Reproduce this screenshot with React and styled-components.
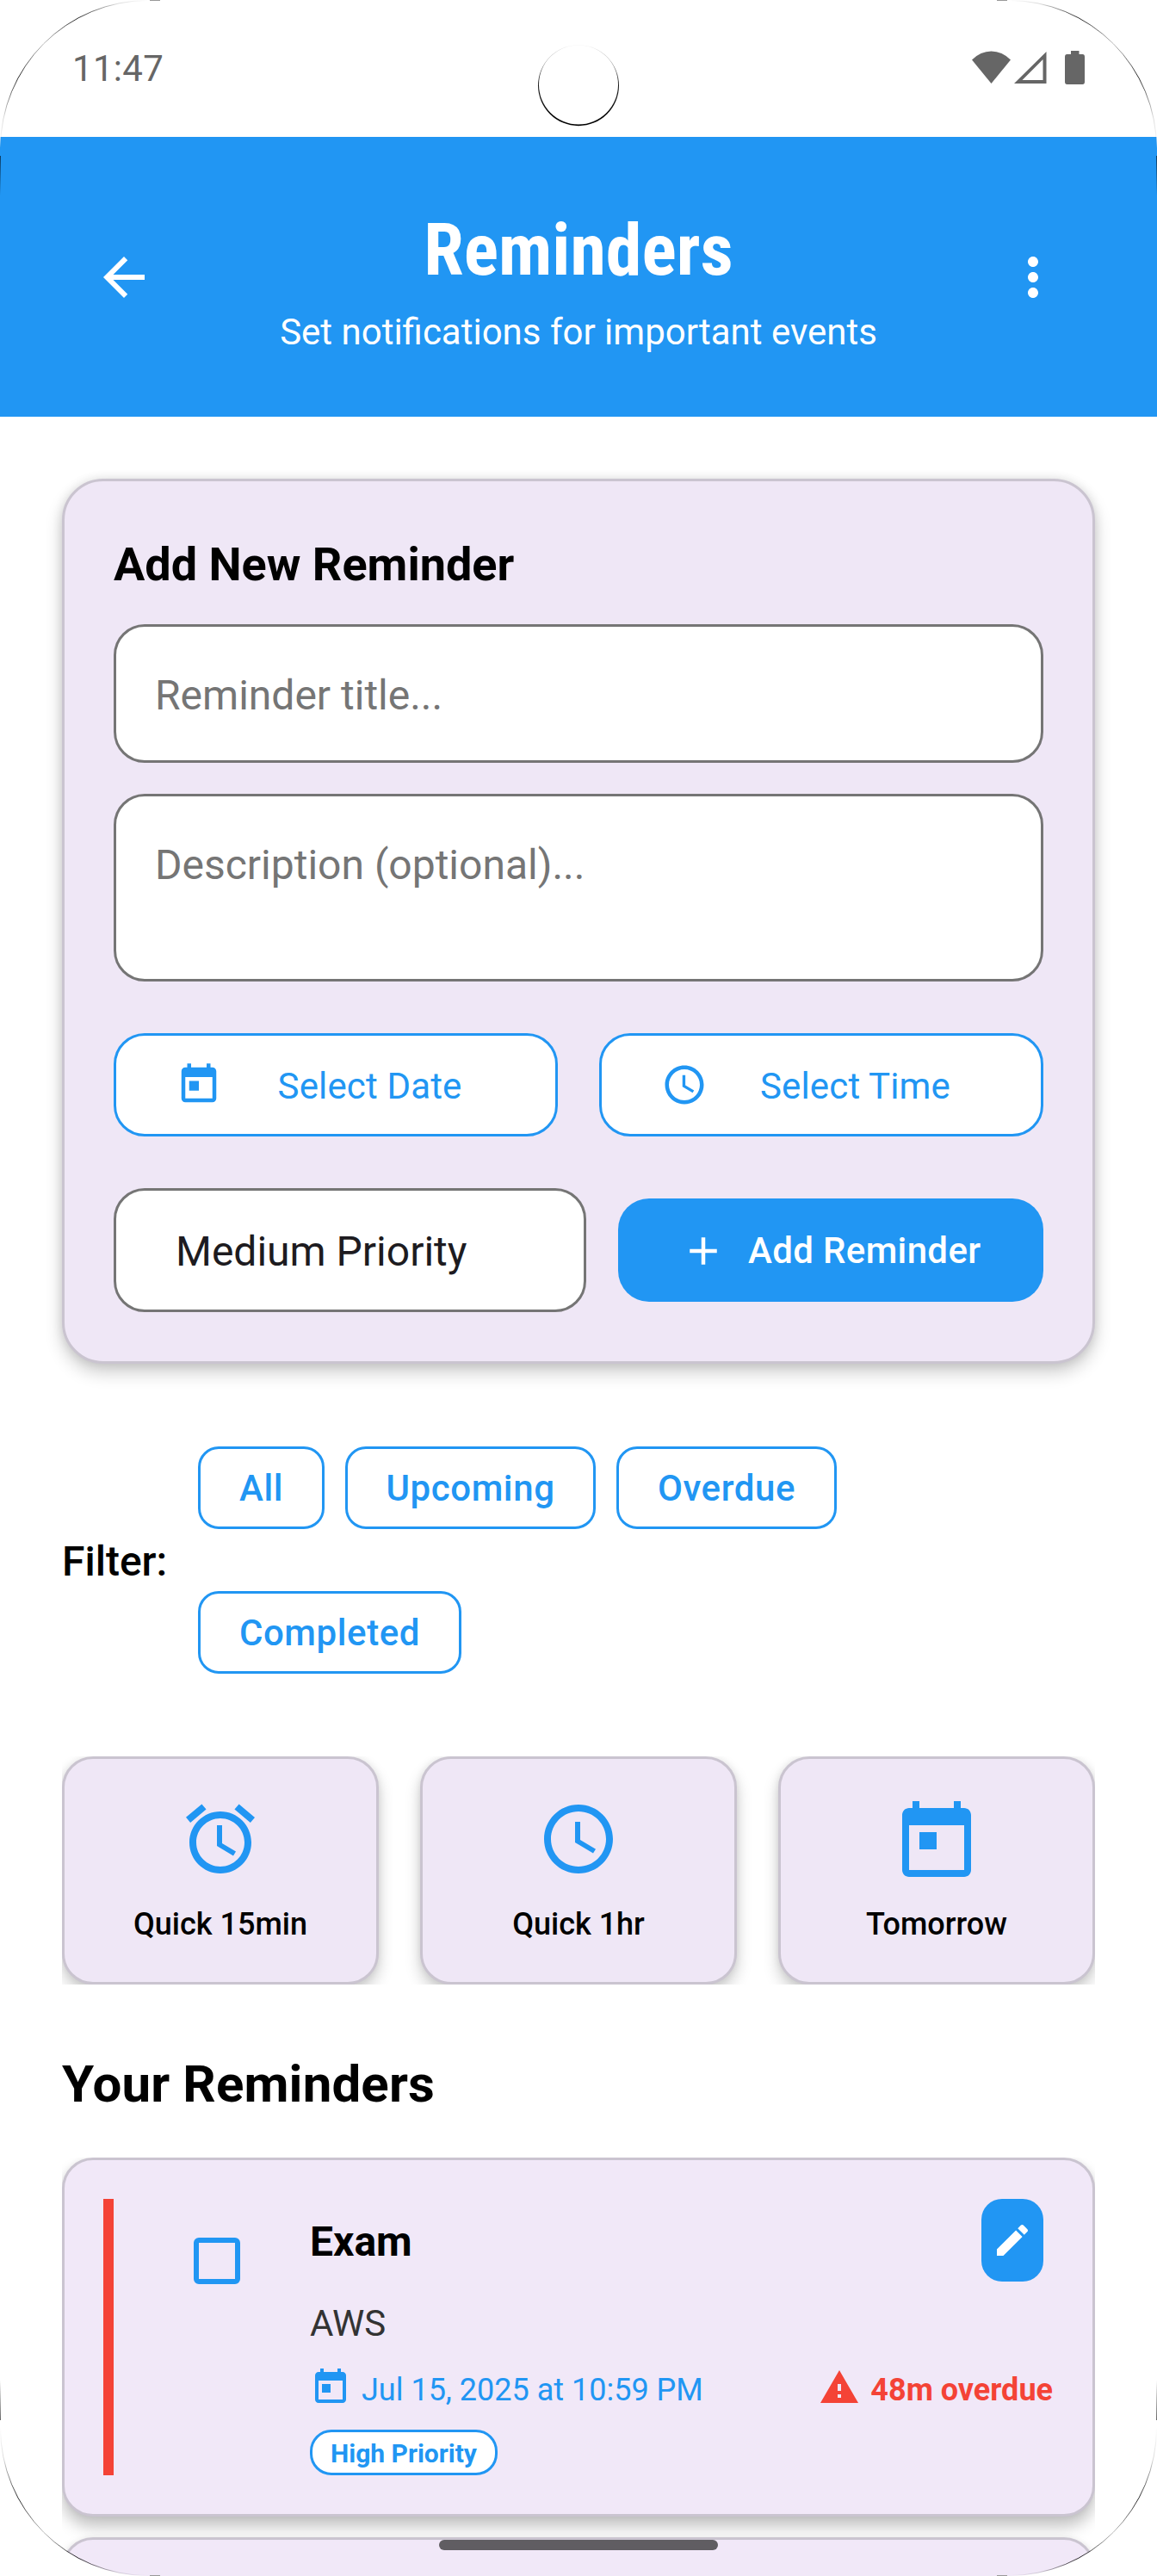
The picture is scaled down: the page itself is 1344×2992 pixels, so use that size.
import React from "react";
import styled, { createGlobalStyle } from "styled-components";

const BLUE = "#2196f3";
const RED = "#f44336";

const GlobalStyle = createGlobalStyle`
  * { box-sizing: border-box; }
  html, body { margin: 0; background: #fff; }
  body, input, textarea, button {
    font-family: Roboto, "Liberation Sans", sans-serif;
  }
`;

const Screen = styled.main`
  position: relative;
  display: flex;
  flex-direction: column;
  width: 1344px;
  height: 2992px;
  overflow: hidden;
  background: #fff;
  color: #000;
`;

const StatusBar = styled.div`
  display: flex;
  justify-content: space-between;
  align-items: flex-start;
  height: 159px;
  flex: none;
  padding: 55px 84px 0;
`;

const Clock = styled.span`
  font-size: 42px;
  line-height: 50px;
  letter-spacing: 0.3px;
  color: #666;
`;

const Header = styled.header`
  display: flex;
  align-items: center;
  justify-content: space-between;
  height: 325px;
  flex: none;
  padding: 0 108px;
  background: ${BLUE};
  color: #fff;
`;

const HeaderText = styled.div`
  display: flex;
  flex-direction: column;
  align-items: center;
  gap: 21px;
  padding-top: 9px;
`;

const Title = styled.h1`
  margin: 0;
  font-family: "Roboto Condensed", Roboto, sans-serif;
  font-stretch: 75%;
  font-weight: 700;
  font-size: 84px;
  line-height: 98px;
`;

const Subtitle = styled.p`
  margin: 0;
  font-size: 42px;
  line-height: 49px;
`;

const IconButton = styled.button`
  display: flex;
  padding: 0;
  border: 0;
  background: none;
  color: inherit;
`;

const Glyph = styled.svg`
  display: block;
  flex: none;
  width: ${(p) => p.$size}px;
  height: ${(p) => p.$size}px;
  fill: currentColor;
`;

const Content = styled.div`
  display: flex;
  flex-direction: column;
  padding: 72px 72px 0;
`;

const FormCard = styled.section`
  display: flex;
  flex-direction: column;
  height: 1028px;
  padding: 65px 57px 57px;
  border: 3px solid #cac4d0;
  border-radius: 48px;
  background: #efe7f6;
  box-shadow: 0 10px 20px rgba(0, 0, 0, 0.2), 0 0 12px rgba(0, 0, 0, 0.1);
`;

const CardTitle = styled.h2`
  margin: 0 0 37px;
  font-size: 54px;
  line-height: 64px;
  font-weight: 700;
`;

const TitleInput = styled.input`
  height: 161px;
  padding: 4px 45px 0;
  border: 3px solid #757575;
  border-radius: 36px;
  background: #fff;
  font-size: 48px;
  &::placeholder { color: #757575; opacity: 1; }
`;

const DescriptionInput = styled.textarea`
  height: 218px;
  margin: 36px 0 60px;
  padding: 52px 45px 0;
  border: 3px solid #757575;
  border-radius: 36px;
  background: #fff;
  font-size: 48px;
  line-height: 56px;
  resize: none;
  overflow: hidden;
  &::placeholder { color: #757575; opacity: 1; }
`;

const PickerRow = styled.div`
  display: flex;
  gap: 48px;
  margin-bottom: 60px;
`;

const PickerButton = styled.button`
  display: flex;
  align-items: center;
  flex: 1;
  height: 120px;
  padding: 0 69px;
  border: 3px solid ${BLUE};
  border-radius: 36px;
  background: #fff;
  color: ${BLUE};
  font-size: 42px;
`;

const PickerLabel = styled.span`
  flex: 1;
  padding: 2px 0 0 25px;
  letter-spacing: 0.15px;
  text-align: center;
`;

const SubmitRow = styled.div`
  display: flex;
  align-items: center;
  gap: 37px;
`;

const PrioritySelect = styled.div`
  display: flex;
  align-items: center;
  width: 549px;
  height: 144px;
  padding: 3px 69px 0;
  border: 3px solid #757575;
  border-radius: 36px;
  background: #fff;
  color: #1d1b20;
  font-size: 48px;
`;

const AddButton = styled.button`
  display: flex;
  align-items: center;
  flex: 1;
  height: 120px;
  gap: 25px;
  padding: 1px 0 0 72px;
  border: 0;
  border-radius: 36px;
  background: ${BLUE};
  color: #fff;
  font-size: 42px;
  font-weight: 500;
  letter-spacing: 0.35px;
  white-space: nowrap;
`;

const FilterRow = styled.section`
  display: flex;
  align-items: center;
  gap: 36px;
  margin-top: 96px;
  height: 264px;
`;

const FilterLabel = styled.span`
  width: 122px;
  padding-top: 2px;
  font-size: 48px;
  font-weight: 500;
  white-space: nowrap;
`;

const ChipGroup = styled.div`
  display: flex;
  flex-wrap: wrap;
  gap: 72px 24px;
  width: 900px;
`;

const Chip = styled.button`
  height: 96px;
  width: ${(p) => p.$width}px;
  padding: 0;
  border: 3px solid ${BLUE};
  border-radius: 24px;
  background: #fff;
  color: ${BLUE};
  font-size: 42px;
  font-weight: 500;
  letter-spacing: 0.6px;
  text-align: center;
`;

const QuickRow = styled.section`
  display: flex;
  gap: 48px;
  margin-top: 96px;
  height: 265px;
  overflow: hidden;
`;

const QuickCard = styled.button`
  display: flex;
  flex-direction: column;
  align-items: center;
  flex: 1;
  height: 265px;
  padding: 45px 0 0;
  border: 3px solid #cac4d0;
  border-radius: 36px;
  background: #efe7f6;
  box-shadow: 0 10px 18px rgba(0, 0, 0, 0.2), 0 0 8px rgba(0, 0, 0, 0.08);
  color: ${BLUE};
`;

const QuickLabel = styled.span`
  margin-top: 30px;
  font-size: 36px;
  line-height: 42px;
  font-weight: 500;
  color: #000;
`;

const SectionTitle = styled.h2`
  margin: 80px 0 50px;
  font-size: 60px;
  line-height: 71px;
  font-weight: 700;
  letter-spacing: 0.15px;
`;

const ReminderList = styled.section`
  display: flex;
  flex-direction: column;
  gap: 24px;
  height: 486px;
  overflow: hidden;
`;

const ReminderCard = styled.article`
  display: flex;
  align-items: flex-start;
  flex: none;
  height: 417px;
  padding: 45px;
  border: 3px solid #cac4d0;
  border-radius: 36px;
  background: #f1e8f8;
  box-shadow: 0 12px 18px rgba(0, 0, 0, 0.24), 0 0 6px rgba(0, 0, 0, 0.06);
`;

const PriorityBar = styled.div`
  width: 12px;
  height: 321px;
  flex: none;
  background: ${RED};
`;

const Checkbox = styled.span`
  width: 54px;
  height: 54px;
  flex: none;
  margin: 45px 81px 0 93px;
  border: 6px solid ${BLUE};
  border-radius: 6px;
`;

const Details = styled.div`
  display: flex;
  flex-direction: column;
  align-items: flex-start;
  flex: 1;
`;

const TopLine = styled.div`
  display: flex;
  justify-content: space-between;
  width: 852px;
  height: 96px;
`;

const ReminderName = styled.h3`
  margin: 21px 0 0;
  font-size: 48px;
  line-height: 58px;
  font-weight: 700;
`;

const EditButton = styled.button`
  display: flex;
  align-items: center;
  justify-content: center;
  width: 72px;
  height: 96px;
  padding: 0;
  border: 0;
  border-radius: 24px;
  background: ${BLUE};
  color: #fff;
`;

const Note = styled.p`
  margin: 24px 0 0;
  font-size: 42px;
  line-height: 50px;
  color: #333;
`;

const MetaLine = styled.div`
  display: flex;
  align-items: center;
  justify-content: space-between;
  width: 863px;
  height: 48px;
  margin-top: 25px;
`;

const Meta = styled.span`
  display: flex;
  align-items: center;
  gap: 12px;
  color: ${(p) => p.$color};
  font-size: 36px;
  line-height: 42px;
  font-weight: ${(p) => p.$weight};
  white-space: nowrap;
`;

const MetaText = styled.span`
  padding-top: 6px;
`;

const Badge = styled.span`
  width: 218px;
  height: 53px;
  margin-top: 25px;
  padding-top: 1px;
  border: 3px solid ${BLUE};
  border-radius: 25px;
  background: #fff;
  color: ${BLUE};
  font-size: 30px;
  line-height: 47px;
  font-weight: 700;
  text-align: center;
`;

const NavHandle = styled.div`
  position: absolute;
  left: 510px;
  top: 2950px;
  width: 324px;
  height: 12px;
  border-radius: 6px;
  background: #605d62;
`;

const DeviceMask = styled.svg`
  position: absolute;
  inset: 0;
  width: 1344px;
  height: 2992px;
  pointer-events: none;
`;

const StatusGlyphs = styled.svg`
  width: 132px;
  height: 42px;
  margin-top: 2px;
  fill: #666;
`;

const PATHS = {
  back: "M20 11H7.83l5.59-5.59L12 4l-8 8 8 8 1.41-1.41L7.83 13H20z",
  more: "M12 8c1.1 0 2-.9 2-2s-.9-2-2-2-2 .9-2 2 .9 2 2 2zm0 2c-1.1 0-2 .9-2 2s.9 2 2 2 2-.9 2-2-.9-2-2-2zm0 6c-1.1 0-2 .9-2 2s.9 2 2 2 2-.9 2-2-.9-2-2-2z",
  today: "M19 3h-1V1h-2v2H8V1H6v2H5c-1.11 0-1.99.9-1.99 2L3 19c0 1.1.89 2 2 2h14c1.1 0 2-.9 2-2V5c0-1.1-.9-2-2-2zm0 16H5V8h14v11zM7 10h5v5H7z",
  calendar: "M20 3h-1V1h-2v2H7V1H5v2H4c-1.1 0-2 .9-2 2v16c0 1.1.9 2 2 2h16c1.1 0 2-.9 2-2V5c0-1.1-.9-2-2-2zm0 18H4V8h16v13zM7 10h5v5H7z",
  clock: "M11.99 2C6.47 2 2 6.48 2 12s4.47 10 9.99 10C17.52 22 22 17.52 22 12S17.52 2 11.99 2zM12 20c-4.42 0-8-3.58-8-8s3.58-8 8-8 8 3.58 8 8-3.58 8-8 8zm.5-13H11v6l5.25 3.15.75-1.23-4.5-2.67z",
  alarm: "M22 5.72l-4.6-3.86-1.29 1.53 4.6 3.86L22 5.72zM7.88 3.39L6.6 1.86 2 5.71l1.29 1.53 4.59-3.85zM12.5 8H11v6l4.75 2.85.75-1.23-4-2.37V8zM12 4c-4.97 0-9 4.03-9 9s4.02 9 9 9c4.97 0 9-4.03 9-9s-4.03-9-9-9zm0 16c-3.87 0-7-3.13-7-7s3.13-7 7-7 7 3.13 7 7-3.13 7-7 7z",
  plus: "M19 13h-6v6h-2v-6H5v-2h6V5h2v6h6v2z",
  edit: "M3 17.25V21h3.75L17.81 9.94l-3.75-3.75L3 17.25zM20.71 7.04c.39-.39.39-1.02 0-1.41l-2.34-2.34c-.39-.39-1.02-.39-1.41 0l-1.83 1.83 3.75 3.75 1.83-1.83z",
  warning: "M1 21h22L12 2 1 21zm12-3h-2v-2h2v2zm0-4h-2v-4h2v4z",
};

function Icon({ name, size }) {
  return (
    <Glyph viewBox="0 0 24 24" $size={size} aria-hidden="true">
      <path d={PATHS[name]} />
    </Glyph>
  );
}

function Frame() {
  const corner = "M0 0H172A172 172 0 0 0 0 172Z";
  const places = [
    "",
    "translate(1344 0) scale(-1 1)",
    "translate(0 2992) scale(1 -1)",
    "translate(1344 2992) scale(-1 -1)",
  ];
  return (
    <DeviceMask viewBox="0 0 1344 2992" aria-hidden="true">
      <defs>
        <linearGradient id="edge" x1="0" y1="0" x2="0" y2="1">
          <stop offset="0" stopColor="#000" stopOpacity="0.6" />
          <stop offset="1" stopColor="#000" stopOpacity="0" />
        </linearGradient>
        <linearGradient id="lens" x1="0" y1="0" x2="0" y2="1">
          <stop offset="0" stopColor="#000" stopOpacity="0.04" />
          <stop offset="0.2" stopColor="#000" stopOpacity="0.35" />
          <stop offset="0.5" stopColor="#000" stopOpacity="0.9" />
          <stop offset="1" stopColor="#000" stopOpacity="1" />
        </linearGradient>
        <linearGradient id="rim" gradientUnits="userSpaceOnUse" x1="0" y1="172" x2="172" y2="0">
          <stop offset="0" stopColor="#000" stopOpacity="0" />
          <stop offset="0.12" stopColor="#000" stopOpacity="0.15" />
          <stop offset="0.3" stopColor="#000" stopOpacity="0.85" />
          <stop offset="0.5" stopColor="#000" stopOpacity="0.25" />
          <stop offset="0.7" stopColor="#000" stopOpacity="0.85" />
          <stop offset="0.88" stopColor="#000" stopOpacity="0.15" />
          <stop offset="1" stopColor="#000" stopOpacity="0" />
        </linearGradient>
      </defs>
      {places.map((t) => (
        <g key={t} transform={t}>
          <path d={corner} fill="#fff" />
          <path d="M172 0.5A171.5 171.5 0 0 0 0.5 172" fill="none" stroke="url(#rim)" strokeWidth="1" />
          <rect x="0" y="181" width="1" height="46" fill="url(#edge)" />
          <rect x="174" y="0" width="12" height="1" fill="#999" />
        </g>
      ))}
      <circle cx="672" cy="99.2" r="47" fill="url(#lens)" />
      <circle cx="672" cy="98.4" r="46" fill="#fff" />
    </DeviceMask>
  );
}

const FILTERS = [
  ["All", 147],
  ["Upcoming", 291],
  ["Overdue", 256],
  ["Completed", 306],
];

const QUICK = [
  ["alarm", "Quick 15min"],
  ["clock", "Quick 1hr"],
  ["calendar", "Tomorrow"],
];

export default function App() {
  return (
    <>
      <GlobalStyle />
      <Screen>
        <StatusBar>
          <Clock>11:47</Clock>
          <StatusGlyphs viewBox="1128 57 132 42" aria-hidden="true">
            <path d="M1151.5 97L1129 69.5Q1139 59.5 1151.5 59.5T1174 69.5Z" />
            <path fillRule="evenodd" d="M1178 97L1215.5 60V97ZM1187.5 93H1211.5V69Z" />
            <path d="M1244 59H1253.500V63H1257.500Q1260 63 1260 66V95Q1260 98 1257.500 98H1239.500Q1237 98 1237 95V66Q1237 63 1239.500 63H1244Z" />
          </StatusGlyphs>
        </StatusBar>
        <Header>
          <IconButton aria-label="Back"><Icon name="back" size={72} /></IconButton>
          <HeaderText>
            <Title>Reminders</Title>
            <Subtitle>Set notifications for important events</Subtitle>
          </HeaderText>
          <IconButton aria-label="More"><Icon name="more" size={72} /></IconButton>
        </Header>
        <Content>
          <FormCard>
            <CardTitle>Add New Reminder</CardTitle>
            <TitleInput placeholder="Reminder title..." />
            <DescriptionInput placeholder="Description (optional)..." />
            <PickerRow>
              <PickerButton>
                <Icon name="today" size={54} />
                <PickerLabel>Select Date</PickerLabel>
              </PickerButton>
              <PickerButton>
                <Icon name="clock" size={54} />
                <PickerLabel>Select Time</PickerLabel>
              </PickerButton>
            </PickerRow>
            <SubmitRow>
              <PrioritySelect>Medium Priority</PrioritySelect>
              <AddButton>
                <Icon name="plus" size={54} />
                Add Reminder
              </AddButton>
            </SubmitRow>
          </FormCard>
          <FilterRow>
            <FilterLabel>Filter:</FilterLabel>
            <ChipGroup>
              {FILTERS.map(([label, width]) => (
                <Chip key={label} $width={width}>{label}</Chip>
              ))}
            </ChipGroup>
          </FilterRow>
          <QuickRow>
            {QUICK.map(([icon, label]) => (
              <QuickCard key={label}>
                <Icon name={icon} size={96} />
                <QuickLabel>{label}</QuickLabel>
              </QuickCard>
            ))}
          </QuickRow>
          <SectionTitle>Your Reminders</SectionTitle>
          <ReminderList>
            <ReminderCard>
              <PriorityBar />
              <Checkbox role="checkbox" aria-checked="false" />
              <Details>
                <TopLine>
                  <ReminderName>Exam</ReminderName>
                  <EditButton aria-label="Edit"><Icon name="edit" size={48} /></EditButton>
                </TopLine>
                <Note>AWS</Note>
                <MetaLine>
                  <Meta $color={BLUE} $weight={400}>
                    <Icon name="today" size={48} />
                    <MetaText>Jul 15, 2025 at 10:59 PM</MetaText>
                  </Meta>
                  <Meta $color={RED} $weight={700}>
                    <Icon name="warning" size={48} />
                    <MetaText>48m overdue</MetaText>
                  </Meta>
                </MetaLine>
                <Badge>High Priority</Badge>
              </Details>
            </ReminderCard>
            <ReminderCard />
          </ReminderList>
        </Content>
        <NavHandle />
        <Frame />
      </Screen>
    </>
  );
}
